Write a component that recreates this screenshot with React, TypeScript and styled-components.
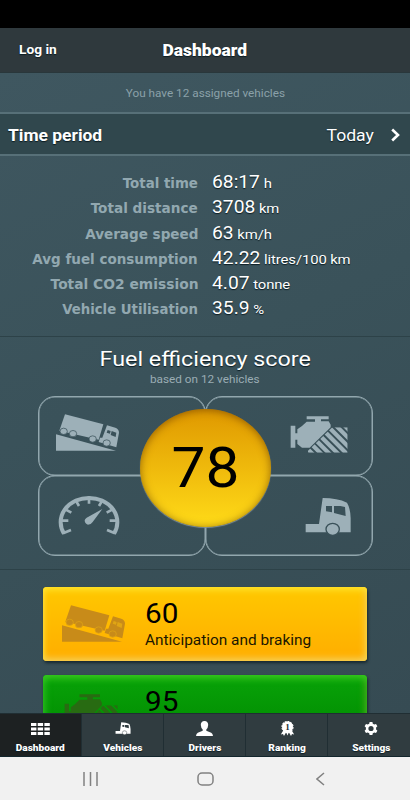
import React from "react";
import styled, { createGlobalStyle, css } from "styled-components";

const GlobalStyle = createGlobalStyle`
  * { box-sizing: border-box; }
  body { margin: 0; background: #000; font-family: Roboto, sans-serif; }
`;

type TextProps = { $size: number; $weight?: number; $color?: string; $origin?: string; $stretch?: number; $shadow?: boolean };

const Text = styled.span<TextProps>`
  display: block;
  white-space: nowrap;
  font-size: ${(p) => p.$size}px;
  font-weight: ${(p) => p.$weight ?? 400};
  color: ${(p) => p.$color ?? "#fff"};
  transform: scaleX(${(p) => p.$stretch ?? 1.1});
  transform-origin: ${(p) => p.$origin ?? "center"};
  ${(p) => p.$shadow && css`text-shadow: 0 1px 1px #0b1c22;`}
`;

const Screen = styled.div`
  width: 410px;
  height: 800px;
  display: flex;
  flex-direction: column;
  overflow: hidden;
  background: #000;
`;

const StatusBar = styled.div`
  height: 28px;
  flex: none;
  background: #000;
`;

const Header = styled.header`
  height: 45px;
  flex: none;
  display: grid;
  grid-template-columns: 1fr 100px 1fr;
  align-items: center;
  justify-items: center;
  padding: 0 19px;
  background: #2f393d;
  border-bottom: 1px solid #29373b;
`;

const LoginButton = styled.button`
  border: 0;
  padding: 0;
  background: none;
  font-family: inherit;
  justify-self: start;
  margin-top: -2px;
`;

const Content = styled.main`
  flex: 1;
  min-height: 0;
  overflow: hidden;
  background: linear-gradient(155deg, #3f5760 0%, #3a525a 45%, #364b53 100%);
`;

const Notice = styled.div`
  height: 39px;
  display: flex;
  align-items: center;
  justify-content: center;
  padding-top: 2px;
`;

const PeriodRow = styled.div`
  height: 44px;
  display: flex;
  align-items: center;
  justify-content: space-between;
  padding: 2px 10px 0 8px;
  background: #30474d;
  border-top: 2px solid #577078;
  border-bottom: 2px solid #577078;
`;

const PeriodValue = styled.div`
  display: flex;
  align-items: center;
  gap: 17px;
`;

const Stats = styled.section`
  height: 181px;
  padding-top: 14px;
  border-bottom: 1px solid #2d4248;
`;

const StatRow = styled.div`
  height: 25.3px;
  display: grid;
  grid-template-columns: 198px 1fr;
  column-gap: 14px;
  align-items: baseline;
  line-height: 25px;
`;

const StatLabel = styled(Text)`
  justify-self: end;
  font-family: "DejaVu Sans", sans-serif;
`;

const StatValue = styled(Text)`
  justify-self: start;
`;

const Unit = styled.span`
  font-size: 13.5px;
  margin-left: -1px;
  letter-spacing: -0.1px;
`;

const Score = styled.section`
  height: 233px;
  display: flex;
  flex-direction: column;
  align-items: center;
  padding-top: 10px;
  border-bottom: 1px solid #2d4248;
`;

const ScoreTitle = styled.div`
  height: 26px;
  line-height: 25px;
`;

const ScoreNote = styled.div`
  height: 23px;
  line-height: 14px;
`;

const Quadrants = styled.div`
  position: relative;
  width: 335px;
  height: 160px;
  display: grid;
  grid-template-columns: 168px 167px;
  grid-template-rows: 79px 80px;
`;

const Quadrant = styled.div<{ $end?: boolean; $pad: string }>`
  display: flex;
  justify-content: ${(p) => (p.$end ? "flex-end" : "flex-start")};
  align-items: flex-start;
  padding: ${(p) => p.$pad};
  border: 1px solid #92a7ae;
  box-shadow: inset 0 0 0 0.5px #92a7ae;
  border-radius: 17px;
  margin-left: ${(p) => (p.$end ? "-1px" : "0")};
  height: 80px;
  &:nth-child(n + 3) { height: 81px; }
`;

const ScoreDial = styled.div`
  position: absolute;
  left: 102px;
  top: 13px;
  width: 131px;
  height: 118px;
  border-radius: 50%;
  display: flex;
  align-items: center;
  justify-content: center;
  background: linear-gradient(#df9800, #ffdb18);
  box-shadow: inset 0 1px 8px rgba(100, 55, 0, 0.65), 0 1px 1px #829098;
`;

const Cards = styled.section`
  display: flex;
  flex-direction: column;
  align-items: center;
  gap: 14px;
  padding-top: 17px;
`;

const Card = styled.article<{ $tone: "amber" | "green" }>`
  width: 324px;
  height: 74px;
  flex: none;
  display: grid;
  grid-template-columns: 84px 1fr;
  border-radius: 4px;
  padding: 17px 0 0 18px;
  ${(p) =>
    p.$tone === "amber"
      ? css`
          background: linear-gradient(#ffc800, #ffad00);
          box-shadow: inset 0 5px 6px -2px #ffe32c, inset 0 -5px 6px -2px #f6cf55,
            inset -7px 0 6px -4px #f5c53f, inset 5px 0 6px -4px #ffd62e, 1px 2px 3px #17282f;
        `
      : css`
          background: linear-gradient(#08a308, #008600);
          box-shadow: inset 0 6px 6px -2px #35c61e, inset -7px 0 6px -4px #3da518,
            inset 7px 0 6px -4px #22b51c, 1px 2px 3px #17282f;
        `}
`;

const CardEngine = styled.div`
  padding: 1px 0 0 3px;
`;

const CardBody = styled.div`
  display: flex;
  flex-direction: column;
  margin-top: -6px;
`;

const CardScore = styled.div`
  height: 34px;
  line-height: 33px;
`;

const Tabs = styled.nav`
  height: 44px;
  flex: none;
  display: grid;
  grid-template-columns: repeat(5, 82px);
  border-bottom: 1px solid #13262d;
`;

const Tab = styled.button<{ $active?: boolean }>`
  border: 0;
  border-top: 1px solid #202e33;
  border-right: 1px solid #202e33;
  padding: 6px 0 0;
  display: flex;
  flex-direction: column;
  align-items: center;
  gap: 5px;
  font-family: inherit;
  background: ${(p) => (p.$active ? "#1d2122" : "#303c40")};
  &:nth-child(4) { padding-left: 2px; }
  &:last-child { border-right: 0; padding-left: 4px; }
`;

const TabIcon = styled.div`
  height: 17px;
  display: flex;
  align-items: center;
`;

const SystemBar = styled.footer`
  height: 43px;
  flex: none;
  display: grid;
  grid-template-columns: 91px 139px 90px;
  justify-content: center;
  align-items: center;
  justify-items: center;
  background: #f1f1f1;
`;

const Glyph = styled.svg`
  display: block;
  flex: none;
`;

type Tint = { fg: string; bg: string };

const SlopeTruck = ({ fg, bg }: Tint) => (
  <Glyph width="65" height="38.33" viewBox="75 70 195 115">
    <path d="M78 134V183H258Z" fill={fg} />
    <path d="M105 74L220 104L206 150L88 123Z" fill={fg} />
    <path d="M231 107L256 114Q267 118 267 129L259 173L206 157L210 144H217Z" fill={fg} />
    {[[101, 125], [129, 132], [188, 148], [230, 160]].map(([x, y]) => (
      <ellipse key={x} cx={x} cy={y} rx="11" ry="9.5" fill={fg} stroke={bg} strokeWidth="2.2" />
    ))}
    <path d="M233 121L242 124L240 132L230 129ZM245 124L259 129L257 142L242 136Z" fill={bg} />
  </Glyph>
);

const Engine = ({ fg, id, width = 58 }: { fg: string; id: string; width?: number }) => (
  <Glyph width={width} height="38.33" viewBox="268 75 174 115" preserveAspectRatio="none">
    <defs>
      <clipPath id={id}>
        <path d="M322 182L395 112H441V188H322Z" />
      </clipPath>
    </defs>
    <path d="M318 79H384V88H361V94H384L390 104V112L327 173H304L290 162V149H284V173H270V107H284V130H290V118L304 108L318 95H343V88H318Z" fill={fg} />
    <g clipPath={`url(#${id})`} stroke={fg} strokeWidth="12.5">
      <path d="M316 172L346 202M329 159L370 200M342 147L395 200M355 134L421 200M368 121L447 200M381 108L452 179M399 100L452 153M425 100L452 127" />
    </g>
  </Glyph>
);

const Gauge = ({ fg }: { fg: string }) => (
  <Glyph width="62" height="42" viewBox="84 313 186 126">
    <g fill="none" stroke={fg}>
      <path d="M102 432A85 73 0 1 1 252 432" strokeWidth="12" />
      <path d="M99 431L123 421M255 431L231 421M95 393H115M259 393H239M106 359L124 369M248 359L230 369M137 332L147 349M217 332L207 349M177 320V342" strokeWidth="8" />
    </g>
    <path d="M217 358L188 397Q183 405 174 405Q164 402 164 392Q165 387 170 384Z" fill={fg} />
  </Glyph>
);

const Lorry = ({ fg, bg, width, height }: Tint & { width: number; height: number }) => (
  <Glyph width={width} height={height} viewBox="313 321 138 117">
    <path d="M366 324Q410 324 439 338Q449 354 450 385V427H315V402H355Z" fill={fg} />
    <path d="M376 348H394V367L376 364ZM400 348H419L433 351L435 378L400 369Z" fill={bg} />
    <ellipse cx="396" cy="418" rx="20" ry="18" fill={fg} stroke={bg} strokeWidth="4" />
  </Glyph>
);

const GridIcon = () => (
  <Glyph width="19" height="12" viewBox="0 0 19 12" fill="#fff">
    {[0, 4.5, 9].flatMap((y) => [0, 6.7, 13.4].map((x) => <rect key={`${x}-${y}`} x={x} y={y} width="5.4" height="3" />))}
  </Glyph>
);

const PersonIcon = () => (
  <Glyph width="17" height="15" viewBox="0 0 17 15" fill="#fff">
    <path d="M8.5 0C11 0 12.3 1.7 12.2 4Q12 7 10.3 8.5V9.7L15.2 11.7Q16.8 12.4 17 15H0Q.2 12.4 1.8 11.7L6.7 9.7V8.5Q5 7 4.8 4C4.7 1.7 6 0 8.5 0Z" />
  </Glyph>
);

const RosetteBadge = styled.div`
  position: relative;
  width: 15px;
  height: 16px;
`;

const RosetteNumber = styled.span`
  position: absolute;
  inset: 0;
  text-align: center;
  font: 700 9px/12px "Liberation Serif", serif;
  color: #263135;
`;

const Rosette = () => (
  <RosetteBadge>
    <Glyph width="15" height="16" viewBox="0 0 15 16" fill="#fff">
      <path d="M3.5 9L.8 13.5L3 13.1L4 15L6.6 10.6ZM11.5 9L14.2 13.5L12 13.1L11 15L8.4 10.6ZM6 11L7.5 14.5L9 11Z" />
      <circle cx="7.5" cy="6" r="5.5" stroke="#fff" strokeWidth="1.2" strokeDasharray="2 .8" />
    </Glyph>
    <RosetteNumber>1</RosetteNumber>
  </RosetteBadge>
);

const Cog = () => (
  <Glyph width="14" height="13" viewBox="0 0 14 13">
    <path
      fill="#fff"
      fillRule="evenodd"
      d="M5.6 0H8.4L8.8 1.7L10.3 2.5L12 1.9L13.4 4.2L12.1 5.5V7.4L13.4 8.8L12 11.1L10.3 10.5L8.8 11.3L8.4 13H5.6L5.2 11.3L3.7 10.5L2 11.1L.6 8.8L1.9 7.4V5.5L.6 4.2L2 1.9L3.7 2.5L5.2 1.7ZM7 3.9A2.6 2.6 0 1 0 7 9.1A2.6 2.6 0 1 0 7 3.9Z"
    />
  </Glyph>
);

const stats = [
  { label: "Total time", value: "68:17", unit: "h", stretch: 0.978 },
  { label: "Total distance", value: "3708", unit: "km", stretch: 0.994 },
  { label: "Average speed", value: "63", unit: "km/h", stretch: 0.99 },
  { label: "Avg fuel consumption", value: "42.22", unit: "litres/100 km", stretch: 0.986 },
  { label: "Total CO2 emission", value: "4.07", unit: "tonne", stretch: 1.01 },
  { label: "Vehicle Utilisation", value: "35.9", unit: "%", stretch: 0.97 },
];

const tabs = [
  { name: "Dashboard", icon: <GridIcon />, active: true },
  { name: "Vehicles", icon: <Lorry fg="#fff" bg="#303c40" width={16} height={13} /> },
  { name: "Drivers", icon: <PersonIcon /> },
  { name: "Ranking", icon: <Rosette /> },
  { name: "Settings", icon: <Cog /> },
];

const PALE = "#9db0b8";
const SLATE = "#3a5159";

export default function App() {
  return (
    <>
      <GlobalStyle />
      <Screen>
        <StatusBar />
        <Header>
          <LoginButton>
            <Text $size={12.5} $weight={700} $origin="left" $shadow>Log in</Text>
          </LoginButton>
          <Text $size={16} $weight={900} $stretch={1.09} $shadow>Dashboard</Text>
        </Header>
        <Content>
          <Notice>
            <Text $size={10.7} $color="#8ba1a9">You have 12 assigned vehicles</Text>
          </Notice>
          <PeriodRow>
            <Text $size={16} $weight={700} $origin="left" $stretch={1.09} $shadow>Time period</Text>
            <PeriodValue>
              <Text $size={16.3} $origin="right" $stretch={1.08} $shadow>Today</Text>
              <Glyph width="9" height="14" viewBox="0 0 9 14" fill="none" stroke="#fff" strokeWidth="2.6">
                <path d="M1.2 1.5L7 7L1.2 12.5" />
              </Glyph>
            </PeriodValue>
          </PeriodRow>
          <Stats>
            {stats.map((s) => (
              <StatRow key={s.label}>
                <StatLabel $size={13.7} $weight={700} $color="#92a8b0" $origin="right" $stretch={s.stretch}>{s.label}</StatLabel>
                <StatValue $size={17.5} $origin="left" $shadow>
                  {s.value} <Unit>{s.unit}</Unit>
                </StatValue>
              </StatRow>
            ))}
          </Stats>
          <Score>
            <ScoreTitle>
              <Text $size={21} $stretch={1.11} $shadow>Fuel efficiency score</Text>
            </ScoreTitle>
            <ScoreNote>
              <Text $size={10.7} $color="#9aadb4">based on 12 vehicles</Text>
            </ScoreNote>
            <Quadrants>
              <Quadrant $pad="16px 0 0 16px"><SlopeTruck fg={PALE} bg={SLATE} /></Quadrant>
              <Quadrant $end $pad="18px 24px 0 0"><Engine fg={PALE} id="engine-stripes" /></Quadrant>
              <Quadrant $pad="18px 0 0 19px"><Gauge fg={PALE} /></Quadrant>
              <Quadrant $end $pad="21px 21px 0 0"><Lorry fg={PALE} bg={SLATE} width={46} height={39} /></Quadrant>
              <ScoreDial>
                <Text $size={56} $color="#000" $stretch={1.08}>78</Text>
              </ScoreDial>
            </Quadrants>
          </Score>
          <Cards>
            <Card $tone="amber">
              <SlopeTruck fg="#c88b19" bg="#e0a514" />
              <CardBody>
                <CardScore><Text $size={27} $color="#000" $origin="left">60</Text></CardScore>
                <Text $size={14} $color="#1a1600" $origin="left">Anticipation and braking</Text>
              </CardBody>
            </Card>
            <Card $tone="green">
              <CardEngine>
                <Engine fg="#286b12" id="card-stripes" width={54} />
              </CardEngine>
              <CardBody>
                <CardScore><Text $size={27} $color="#000" $origin="left">95</Text></CardScore>
              </CardBody>
            </Card>
          </Cards>
        </Content>
        <Tabs>
          {tabs.map((t) => (
            <Tab key={t.name} $active={t.active}>
              <TabIcon>{t.icon}</TabIcon>
              <Text $size={9.2} $weight={900} $shadow>{t.name}</Text>
            </Tab>
          ))}
        </Tabs>
        <SystemBar>
          <Glyph width="15" height="14" viewBox="0 0 15 14" stroke="#818181" strokeWidth="1.5">
            <path d="M1 0V14M7.5 0V14M14 0V14" />
          </Glyph>
          <Glyph width="17" height="14" viewBox="0 0 17 14" fill="none" stroke="#818181" strokeWidth="1.5">
            <rect x="1" y="1" width="15" height="12" rx="4" />
          </Glyph>
          <Glyph width="9" height="14" viewBox="0 0 9 14" fill="none" stroke="#818181" strokeWidth="1.5">
            <path d="M8 1L1 7L8 13" />
          </Glyph>
        </SystemBar>
      </Screen>
    </>
  );
}
